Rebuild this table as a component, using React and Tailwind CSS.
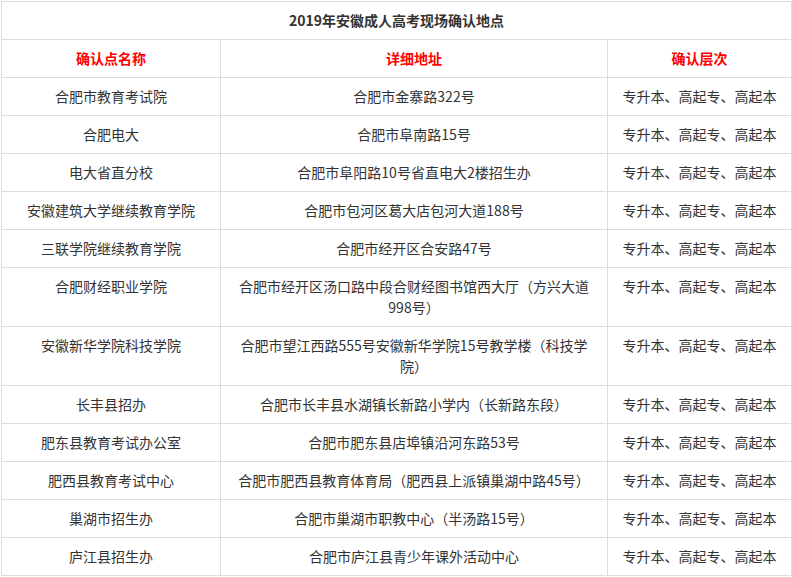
const rows = [
  ['合肥市教育考试院', ['合肥市金寨路322号']],
  ['合肥电大', ['合肥市阜南路15号']],
  ['电大省直分校', ['合肥市阜阳路10号省直电大2楼招生办']],
  ['安徽建筑大学继续教育学院', ['合肥市包河区葛大店包河大道188号']],
  ['三联学院继续教育学院', ['合肥市经开区合安路47号']],
  ['合肥财经职业学院', ['合肥市经开区汤口路中段合财经图书馆西大厅（方兴大道', '998号）']],
  ['安徽新华学院科技学院', ['合肥市望江西路555号安徽新华学院15号教学楼（科技学', '院）']],
  ['长丰县招办', ['合肥市长丰县水湖镇长新路小学内（长新路东段）']],
  ['肥东县教育考试办公室', ['合肥市肥东县店埠镇沿河东路53号']],
  ['肥西县教育考试中心', ['合肥市肥西县教育体育局（肥西县上派镇巢湖中路45号）']],
  ['巢湖市招生办', ['合肥市巢湖市职教中心（半汤路15号）']],
  ['庐江县招生办', ['合肥市庐江县青少年课外活动中心']],
];

const level = '专升本、高起专、高起本';

export default function App() {
  return (
    <div
      className="min-h-[577px] bg-white pl-px pt-px"
      style={{ fontFamily: '"Noto Sans CJK SC", "Microsoft YaHei", sans-serif' }}
    >
      <table className="w-[790px] table-fixed border-collapse text-[14px] leading-[21px] text-[#333]">
        <colgroup>
          <col className="w-[219px]" />
          <col className="w-[387px]" />
          <col className="w-[184px]" />
        </colgroup>
        <tbody>
          <tr>
            <td colSpan={3} className="border border-[#ddd] px-2 py-2 text-center align-top font-bold">
              2019年安徽成人高考现场确认地点
            </td>
          </tr>
          <tr>
            <td className="border border-[#ddd] px-2 py-2 text-center align-top font-bold text-[#ff0000]">确认点名称</td>
            <td className="border border-[#ddd] px-2 py-2 text-center align-top font-bold text-[#ff0000]">详细地址</td>
            <td className="border border-[#ddd] px-2 py-2 text-center align-top font-bold text-[#ff0000]">确认层次</td>
          </tr>
          {rows.map(([name, addr]) => (
            <tr key={name}>
              <td className="border border-[#ddd] px-2 py-2 text-center align-top">{name}</td>
              <td className="border border-[#ddd] px-2 py-2 text-center align-top">
                {addr.map((line, i) => (
                  <span key={i}>
                    {i > 0 && <br />}
                    {line}
                  </span>
                ))}
              </td>
              <td className="border border-[#ddd] px-2 py-2 text-center align-top">{level}</td>
            </tr>
          ))}
        </tbody>
      </table>
    </div>
  );
}
